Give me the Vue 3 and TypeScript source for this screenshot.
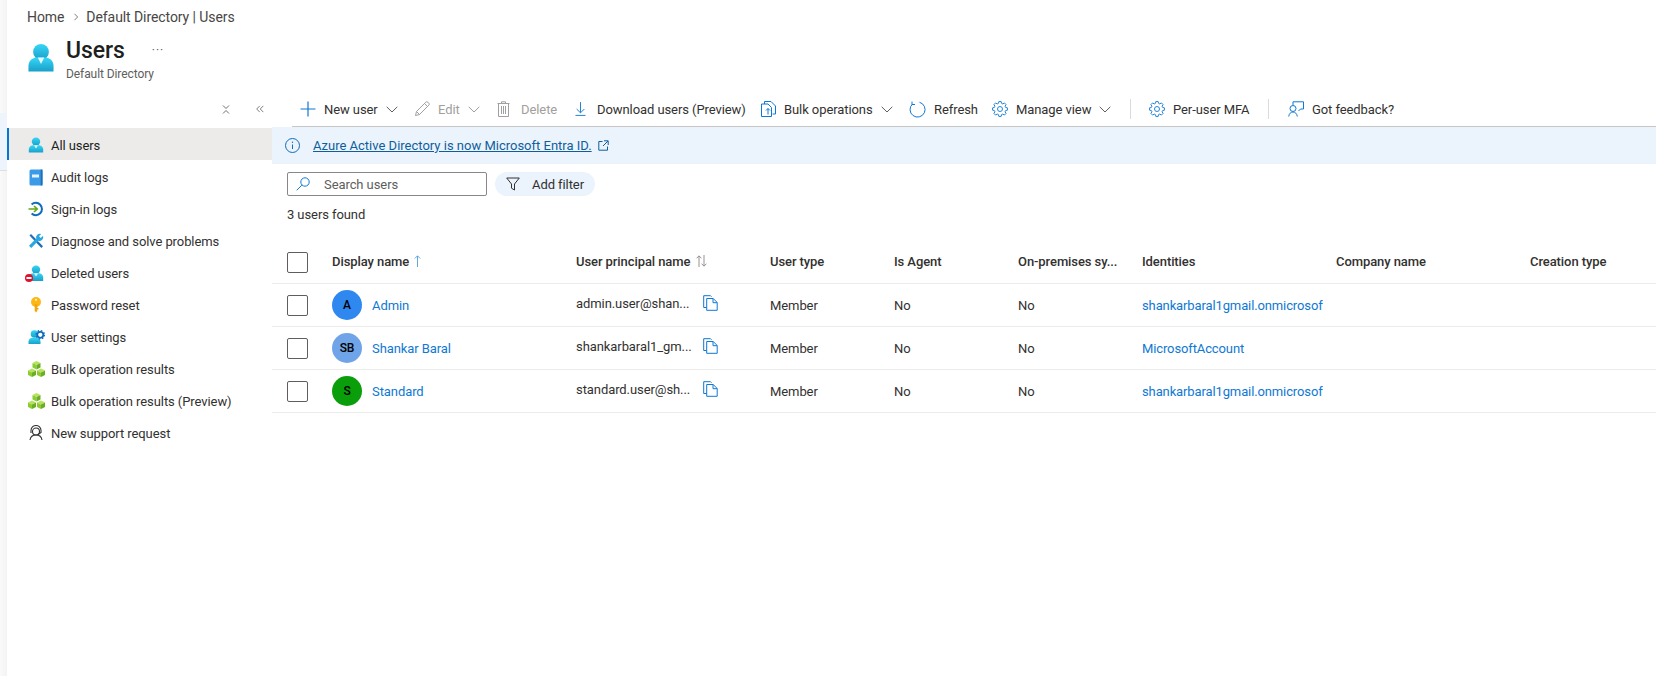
<script setup lang="ts">
type Nav = { label: string; icon: string; active?: boolean }
type User = { initials: string; name: string; upn: string; color: string; identity: string }

const nav: Nav[] = [
  { label: 'All users', icon: 'user', active: true },
  { label: 'Audit logs', icon: 'book' },
  { label: 'Sign-in logs', icon: 'signin' },
  { label: 'Diagnose and solve problems', icon: 'tools' },
  { label: 'Deleted users', icon: 'deleted' },
  { label: 'Password reset', icon: 'key' },
  { label: 'User settings', icon: 'usergear' },
  { label: 'Bulk operation results', icon: 'cubes' },
  { label: 'Bulk operation results (Preview)', icon: 'cubes' },
  { label: 'New support request', icon: 'support' },
]

const users: User[] = [
  { initials: 'A', name: 'Admin', upn: 'admin.user@shan...', color: '#2f88ef', identity: 'shankarbaral1gmail.onmicrosoft.com' },
  { initials: 'SB', name: 'Shankar Baral', upn: 'shankarbaral1_gm...', color: '#6fa5e8', identity: 'MicrosoftAccount' },
  { initials: 'S', name: 'Standard', upn: 'standard.user@sh...', color: '#0a9e0a', identity: 'shankarbaral1gmail.onmicrosoft.com' },
]

const gearPath = (() => {
  const pts: string[] = []
  const at = (r: number, deg: number) => {
    const a = (deg * Math.PI) / 180
    return `${(8 + r * Math.cos(a)).toFixed(2)} ${(8 + r * Math.sin(a)).toFixed(2)}`
  }
  for (let i = 0; i < 8; i++) {
    const c = i * 45
    pts.push(at(5.8, c - 16), at(7.5, c - 9), at(7.5, c + 9), at(5.8, c + 16))
  }
  return `M${pts.join('L')}Z`
})()
</script>

<template>
  <div class="page">
    <svg class="defs" aria-hidden="true">
      <defs>
        <linearGradient id="cyanGrad" x1="0" y1="0" x2="0" y2="1">
          <stop offset="0" stop-color="#36d6f7" />
          <stop offset="1" stop-color="#1a9fc9" />
        </linearGradient>
      </defs>
    </svg>
    <div class="strip"><div class="strip-tint"></div></div>
    <div class="content">
      <nav class="crumbs">
        <span>Home</span>
        <svg class="crumb-chev" width="6" height="8" viewBox="0 0 6 8"><path d="M1.500 .8 4.600 4 1.500 7.200" fill="none" stroke="#605e5c" stroke-width=".8" /></svg>
        <span>Default Directory | Users</span>
      </nav>
      <header class="head">
        <svg class="head-icon" width="26" height="29" viewBox="0 0 28 30">
          <circle cx="14" cy="9" r="8.500" fill="url(#cyanGrad)" />
          <path d="M.5 30v-6c0-6 5-9 9-9h9c4 0 9 3 9 9v6z" fill="url(#cyanGrad)" />
          <path d="M10.500 15h7L14 22z" fill="#e6f7fb" />
        </svg>
        <div class="head-text">
          <div class="title-line">
            <h1>Users</h1>
            <span class="more">···</span>
          </div>
          <div class="subtitle">Default Directory</div>
        </div>
      </header>

      <div class="body">
        <aside class="side">
          <div class="side-tools">
            <svg width="8" height="9" viewBox="0 0 8 9"><path d="M1 .5 4 3.500 7 .5M1 8.500 4 5.500 7 8.500" fill="none" stroke="#605e5c" stroke-width=".9" /></svg>
            <svg width="8" height="8" viewBox="0 0 9 8"><path d="M4.200.5.800 4l3.400 3.500M8.200.5 4.800 4l3.400 3.500" fill="none" stroke="#605e5c" stroke-width=".9" /></svg>
          </div>
          <a v-for="item in nav" :key="item.label" class="nav-item" :class="{ active: item.active }">
            <span class="nav-icon">
              <svg v-if="item.icon === 'user'" width="16" height="16" viewBox="0 0 16 16">
                <circle cx="8" cy="4.600" r="4.200" fill="url(#cyanGrad)" /><path d="M.8 15.500v-3c0-2.800 2.400-4.300 4.700-4.300h5c2.300 0 4.700 1.500 4.700 4.300v3z" fill="url(#cyanGrad)" /><path d="M6 8.200h4L8 11.500z" fill="#e6f7fb" />
              </svg>
              <svg v-else-if="item.icon === 'book'" width="16" height="17" viewBox="0 0 16 17">
                <rect x="1.500" y=".5" width="13" height="16" rx="1.500" fill="#3b9be8" /><rect x="12.700" y=".5" width="1.800" height="16" fill="#1c6fb8" /><rect x="4" y="5.500" width="7" height="3" fill="#e8f3fc" />
              </svg>
              <svg v-else-if="item.icon === 'signin'" width="16" height="16" viewBox="0 0 16 16">
                <path d="M3.600 3.400a6.200 6.200 0 1 1 0 9.200" fill="none" stroke="#0f6cbd" stroke-width="2" /><path d="M.5 8h8.500M6 5l3.200 3L6 11" fill="none" stroke="#67a81c" stroke-width="1.700" />
              </svg>
              <svg v-else-if="item.icon === 'tools'" width="16" height="16" viewBox="0 0 16 16">
                <path d="M3 1 15 13.300 13.400 15 1.500 2.500z" fill="#1f6fb5" /><path d="M15 2.800 12.800 5 11 3.200l2.200-2.200A3.800 3.800 0 0 0 8.200 5.600L1 12.800 3.200 15l7.200-7.200A3.800 3.800 0 0 0 15 2.800z" fill="#28a8e0" />
              </svg>
              <svg v-else-if="item.icon === 'deleted'" class="deleted" width="19" height="17" viewBox="0 0 19 17">
                <circle cx="11" cy="4.600" r="4.200" fill="url(#cyanGrad)" /><path d="M3.800 16v-3.500c0-2.800 2.400-4.300 4.700-4.300h5c2.300 0 4.700 1.500 4.700 4.300V16z" fill="url(#cyanGrad)" /><path d="M9 8.200h4L11 11.500z" fill="#e6f7fb" /><circle cx="4" cy="13" r="4" fill="#e0112b" /><rect x="1.500" y="12" width="5" height="2" fill="#fff" />
              </svg>
              <svg v-else-if="item.icon === 'key'" width="16" height="16" viewBox="0 0 16 16">
                <circle cx="8" cy="5" r="5" fill="#fcb714" /><path d="M6.700 7h2.600v6.800L8 15.500l-1.300-1.700z" fill="#f2a60a" /><rect x="9" y="11" width="1.500" height="1.500" fill="#f2a60a" /><circle cx="8" cy="2.800" r="1.100" fill="#fff3c9" />
              </svg>
              <svg v-else-if="item.icon === 'usergear'" width="17" height="16" viewBox="0 0 17 16">
                <circle cx="6.500" cy="5" r="3.800" fill="url(#cyanGrad)" /><path d="M.5 15v-2.500c0-2.500 2-3.800 4-3.800h4c2 0 4 1.300 4 3.800V15z" fill="url(#cyanGrad)" /><circle cx="12.300" cy="5.800" r="3" fill="#fff" stroke="#0f6cbd" stroke-width="1.700" /><circle cx="12.300" cy="5.800" r="4.200" fill="none" stroke="#0f6cbd" stroke-width="1.400" stroke-dasharray="1.500 1.800" />
              </svg>
              <svg v-else-if="item.icon === 'cubes'" width="17" height="16" viewBox="0 0 17 16">
                <g v-for="t in ['translate(4.500 0)', 'translate(0 7.500)', 'translate(9 7.500)']" :key="t" :transform="t">
                  <path d="M4 0 8 2 4 4 0 2z" fill="#b6e35a" /><path d="M0 2 4 4V8.500L0 6.500z" fill="#8ccc31" /><path d="M8 2 4 4V8.500L8 6.500z" fill="#6cae23" />
                </g>
              </svg>
              <svg v-else width="16" height="16" viewBox="0 0 16 16" fill="none" stroke="#323130" stroke-width="1.100">
                <circle cx="8" cy="6.500" r="3.500" /><path d="M2 15c.5-3.300 3-5 6-5s5.500 1.700 6 5M3 8V5.500a5 5 0 0 1 10 0V7.500L10 9.500" />
              </svg>
            </span>
            <span>{{ item.label }}</span>
          </a>
        </aside>

        <main class="main">
          <div class="toolbar">
            <button class="tb">
              <svg width="16" height="16" viewBox="0 0 16 16"><path d="M8 .5v15M.5 8h15" stroke="#0f78d4" stroke-width="1.200" fill="none" /></svg>
              <span>New user</span>
              <svg width="12" height="7" viewBox="0 0 12 7"><path d="M.7.8 6 6l5.300-5.200" fill="none" stroke="#605e5c" /></svg>
            </button>
            <button class="tb off">
              <svg width="16" height="16" viewBox="0 0 16 16"><path d="M1.500 14.500l1-4L11.800 1.200a1.500 1.500 0 0 1 2.100 0l.9.9a1.500 1.500 0 0 1 0 2.100L5.500 13.500zM2.500 10.500l3 3M10.500 2.500l3 3" fill="none" stroke="#a19f9d" /></svg>
              <span>Edit</span>
              <svg width="12" height="7" viewBox="0 0 12 7"><path d="M.7.8 6 6l5.300-5.200" fill="none" stroke="#a19f9d" /></svg>
            </button>
            <button class="tb off">
              <svg class="wide" width="13" height="16" viewBox="0 0 13 16"><path d="M.5 2.500h12M4.500 2.500V.8h4v1.700M1.500 2.500v13h10v-13M4.500 5v8M6.500 5v8M8.500 5v8" fill="none" stroke="#a19f9d" /></svg>
              <span>Delete</span>
            </button>
            <button class="tb">
              <svg class="wide" width="11" height="16" viewBox="0 0 12 16"><path d="M6 .5v11.500M1.800 8 6 12.200 10.200 8M.5 15h11" fill="none" stroke="#0f78d4" /></svg>
              <span>Download users (Preview)</span>
            </button>
            <button class="tb">
              <svg width="15" height="16" viewBox="0 0 15 16"><path d="M3.500 3V.5h6.500l4.500 4.500v8h-3M.5 3h6.500l3.500 3.500v9H.5zM7 7.500v6M5 9.500 7 7.500l2 2" fill="none" stroke="#0f78d4" /></svg>
              <span>Bulk operations</span>
              <svg width="12" height="7" viewBox="0 0 12 7"><path d="M.7.8 6 6l5.300-5.200" fill="none" stroke="#605e5c" /></svg>
            </button>
            <button class="tb">
              <svg width="17" height="17" viewBox="0 0 17 17"><path d="M10.500 1.300A7.500 7.500 0 1 1 3.500 3M3 .6V3.500H6" fill="none" stroke="#0f78d4" /></svg>
              <span>Refresh</span>
            </button>
            <button class="tb">
              <svg width="16" height="16" viewBox="0 0 16 16"><path :d="gearPath" fill="none" stroke="#0f78d4" stroke-linejoin="round" stroke-width=".9" /><circle cx="8" cy="8" r="2.500" fill="none" stroke="#0f78d4" stroke-width=".9" /></svg>
              <span>Manage view</span>
              <svg width="12" height="7" viewBox="0 0 12 7"><path d="M.7.8 6 6l5.300-5.200" fill="none" stroke="#605e5c" /></svg>
            </button>
            <i class="sep"></i>
            <button class="tb">
              <svg width="16" height="16" viewBox="0 0 16 16"><path :d="gearPath" fill="none" stroke="#0f78d4" stroke-linejoin="round" stroke-width=".9" /><circle cx="8" cy="8" r="2.500" fill="none" stroke="#0f78d4" stroke-width=".9" /></svg>
              <span>Per-user MFA</span>
            </button>
            <i class="sep"></i>
            <button class="tb">
              <svg width="16" height="16" viewBox="0 0 16 16"><path d="M5 4V.8h10.500V8H12.500L10.500 10M.7 15.500c.4-3 2.200-4.500 4.300-4.500s3.900 1.500 4.300 4.500" fill="none" stroke="#0f78d4" /><circle cx="5" cy="7.500" r="3" fill="#fff" stroke="#0f78d4" /></svg>
              <span>Got feedback?</span>
            </button>
          </div>

          <div class="banner">
            <svg width="15" height="15" viewBox="0 0 15 15"><circle cx="7.500" cy="7.500" r="7" fill="none" stroke="#0f6cbd" /><path d="M7.500 6.500v4.500" stroke="#0f6cbd" /><circle cx="7.500" cy="4.300" r=".7" fill="#0f6cbd" /></svg>
            <a class="banner-link">Azure Active Directory is now Microsoft Entra ID.</a>
            <svg width="11" height="11" viewBox="0 0 11 11"><path d="M4.500 1.500H.8v8.700h8.700V6.500M6 .8h4.200V5M10 1 5 6" fill="none" stroke="#0f5e9c" /></svg>
          </div>

          <div class="filters">
            <label class="search">
              <svg width="14" height="14" viewBox="0 0 14 14"><circle cx="9" cy="5" r="4.200" fill="none" stroke="#0f78d4" /><path d="M5.800 8.200.7 13.300" stroke="#0f78d4" /></svg>
              <span>Search users</span>
            </label>
            <button class="pill">
              <svg width="14" height="14" viewBox="0 0 14 14"><path d="M.7 1h12.600L8.500 7v6l-3-1.800V7z" fill="none" stroke="#323130" /></svg>
              <span>Add filter</span>
            </button>
          </div>
          <div class="count">3 users found</div>

          <div class="table">
            <div class="row">
              <span class="check"></span>
              <span class="th">Display name
                <svg class="sort" width="7" height="12" viewBox="0 0 7 12"><path d="M3.500 12V1M.8 3.500 3.500 .8l2.700 2.700" fill="none" stroke="#5ea9e3" /></svg>
              </span>
              <span class="th">User principal name
                <svg class="sort" width="11" height="12" viewBox="0 0 11 12"><path d="M3 12V1M.6 3.300 3 .8l2.400 2.500M8 0v11M5.600 8.700 8 11.200l2.400-2.500" fill="none" stroke="#8a8886" stroke-width=".9" /></svg>
              </span>
              <span class="th">User type</span>
              <span class="th">Is Agent</span>
              <span class="th">On-premises sy...</span>
              <span class="th">Identities</span>
              <span class="th">Company name</span>
              <span class="th">Creation type</span>
            </div>
            <div v-for="u in users" :key="u.name" class="row">
              <span class="check"></span>
              <span class="name-cell">
                <span class="avatar" :style="{ background: u.color }">{{ u.initials }}</span>
                <a class="link">{{ u.name }}</a>
              </span>
              <span class="upn-cell">
                <span class="upn">{{ u.upn }}</span>
                <svg width="15" height="16" viewBox="0 0 15 16"><path d="M3.500 12.500H.7V.7h6.800l1 1M3.700 3.500h6.500l4 4v7.800H3.700zM10 3.500v4.200h4" fill="none" stroke="#0f78d4" /></svg>
              </span>
              <span>Member</span>
              <span>No</span>
              <span>No</span>
              <span class="identity link">{{ u.identity }}</span>
              <span></span>
              <span></span>
            </div>
          </div>
        </main>
      </div>
    </div>
  </div>
</template>

<style>
html, body { margin: 0; background: #fff; }
</style>

<style scoped>
.page {
  display: flex;
  width: 1656px;
  height: 676px;
  overflow: hidden;
  background: #fff;
  color: #323130;
  font-family: Roboto, "Noto Sans", sans-serif;
  font-size: 13px;
  letter-spacing: -0.08px;
}
.defs { width: 0; height: 0; display: block; flex: none; }
.strip {
  width: 7px;
  flex: none;
  padding-top: 113px;
  background: linear-gradient(90deg, #fafafa, #f3f3f3);
  box-sizing: border-box;
}
.strip-tint { height: 57px; background: #eef4fb; border-bottom: 1px solid #e1dfdd; }
.content { flex: 1; min-width: 0; display: flex; flex-direction: column; }
.crumbs {
  height: 33px;
  display: flex;
  align-items: center;
  padding-left: 20px;
  box-sizing: border-box;
  color: #484644;
  font-size: 14px;
}
.crumb-chev { margin: 0 7px 0 9px; }
.head { height: 61px; display: flex; padding-left: 21px; box-sizing: border-box; }
.head-icon { margin-top: 10px; flex: none; }
.head-text { margin-left: 12px; }
.title-line { display: flex; align-items: center; height: 30px; margin-top: 2px; }
h1 { margin: 0; font-size: 23px; font-weight: 500; color: #201f1e; }
.more { margin-left: 27px; color: #605e5c; font-size: 12px; letter-spacing: 1px; }
.subtitle { height: 16px; line-height: 16px; font-size: 12px; color: #605e5c; margin-top: 1px; }

.body { flex: 1; display: flex; min-height: 0; }
.side { width: 265px; flex: none; }
.side-tools {
  height: 34px;
  display: flex;
  align-items: center;
  justify-content: flex-end;
  gap: 26px;
  padding: 0 8px 4px 0;
  box-sizing: border-box;
}
.nav-item {
  height: 32px;
  display: flex;
  align-items: center;
  box-sizing: border-box;
  padding: 2px 0 0 21px;
  color: #323130;
}
.nav-item.active { background: #edebe9; border-left: 2px solid #0078d4; padding-left: 19px; color: #201f1e; }
.nav-icon { width: 23px; flex: none; display: flex; align-items: center; }
.deleted { margin-left: -3px; }

.main { flex: 1; min-width: 0; }
.toolbar {
  height: 33px;
  display: grid;
  grid-template-columns: 114px 83px 78px 186px 148px 83px 138px 19px 119px 20px 1fr;
  align-items: center;
  margin-left: 20px;
  padding: 0 0 2px 8px;
  box-sizing: border-box;
  border-bottom: 1px solid #c8c6c4;
}
.tb {
  display: flex;
  align-items: center;
  gap: 8px;
  padding: 0;
  border: 0;
  background: none;
  font: inherit;
  letter-spacing: inherit;
  color: #323130;
  white-space: nowrap;
}
.tb.off { color: #a19f9d; }
.wide { margin-right: 3px; }
.sep { width: 1px; height: 20px; background: #dcdbd9; display: block; }

.banner {
  height: 37px;
  display: flex;
  align-items: center;
  padding-left: 13px;
  background: #ebf3fc;
  box-sizing: border-box;
}
.banner-link { margin: 0 6px 0 13px; color: #0f5e9c; text-decoration: underline; letter-spacing: 0; }
.filters { display: flex; align-items: center; gap: 8px; padding: 8px 0 0 15px; }
.search {
  width: 200px;
  height: 24px;
  display: flex;
  align-items: center;
  gap: 14px;
  padding-left: 8px;
  box-sizing: border-box;
  border: 1px solid #8a8886;
  border-radius: 2px;
  color: #605e5c;
}
.pill {
  width: 100px;
  height: 24px;
  display: flex;
  align-items: center;
  gap: 12px;
  padding: 0 0 0 11px;
  border: 0;
  border-radius: 12px;
  background: #ebf3fc;
  font: inherit;
  letter-spacing: inherit;
  color: #323130;
}
.count { margin: 10px 0 0 15px; height: 18px; line-height: 18px; }
.table { margin-top: 17px; }
.row {
  display: grid;
  grid-template-columns: 60px 244px 194px 124px 124px 124px 194px 194px 1fr;
  align-items: center;
  height: 43px;
  border-bottom: 1px solid #edebe9;
  box-sizing: border-box;
}
.check {
  width: 21px;
  height: 21px;
  margin-left: 15px;
  border: 1px solid #605e5c;
  border-radius: 2px;
  box-sizing: border-box;
}
.th { font-weight: 500; color: #323130; white-space: nowrap; padding-bottom: 2px; }
.sort { margin-left: 2px; vertical-align: -1px; }
.name-cell { display: flex; align-items: center; gap: 10px; }
.avatar {
  width: 30px;
  height: 30px;
  border-radius: 50%;
  display: flex;
  align-items: center;
  justify-content: center;
  color: #000;
  font-size: 12px;
  font-weight: 500;
}
.link { color: #0f78d4; }
.upn-cell { display: flex; align-items: center; padding-bottom: 4px; }
.upn { width: 127px; white-space: nowrap; }
.identity { width: 181px; overflow: hidden; white-space: nowrap; letter-spacing: -0.12px; }
</style>
